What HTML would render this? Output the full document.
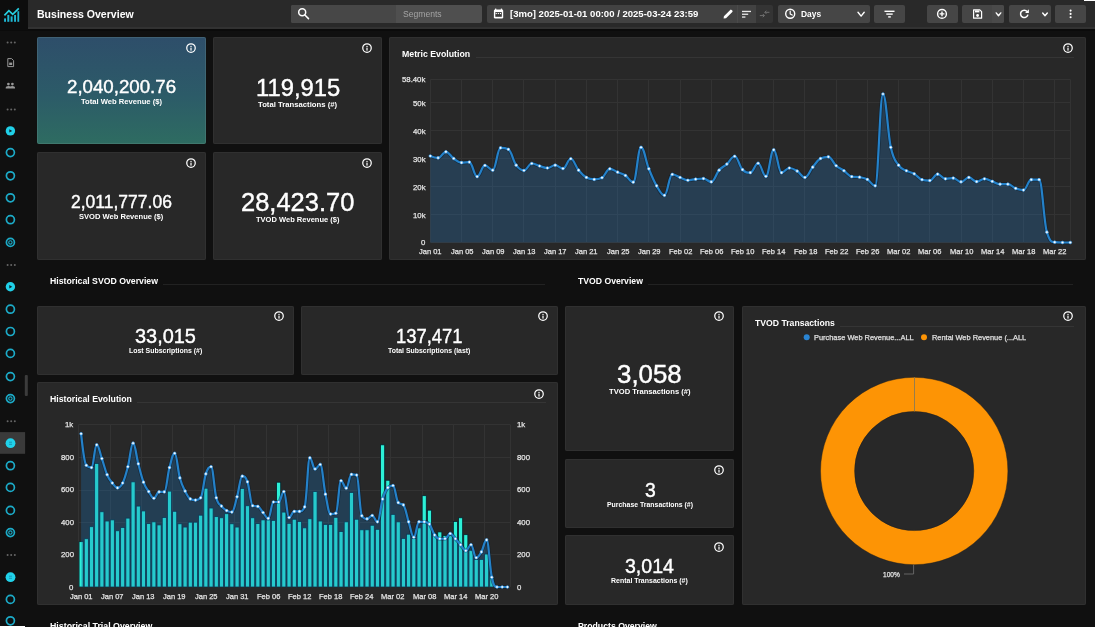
<!DOCTYPE html><html><head><meta charset="utf-8"><title>Business Overview</title><style>
html,body{margin:0;padding:0;background:#101010;}
body{width:1095px;height:627px;overflow:hidden;position:relative;will-change:transform;font-family:"Liberation Sans",sans-serif;}
.t{position:absolute;white-space:nowrap;line-height:1;transform-origin:0 50%;}
.b{position:absolute;}
svg{overflow:visible}
svg text{font-family:"Liberation Sans",sans-serif;}
</style></head><body>
<div class="b" style="left:0.00px;top:0.00px;width:1095.00px;height:27.00px;background:#292929;"></div>
<div class="b" style="left:0.00px;top:27.00px;width:1095.00px;height:2.00px;background:#323232;"></div>
<div class="b" style="left:0.00px;top:29.00px;width:1095.00px;height:1.50px;background:#0b0b0b;"></div>
<div class="b" style="left:0.00px;top:0.00px;width:28.00px;height:29.50px;background:#0d0d0d;"></div>
<div class="b" style="left:1084.00px;top:0.00px;width:11.00px;height:1.00px;background:#fff;"></div>
<div class="b" style="left:0.00px;top:625.70px;width:25.00px;height:1.30px;background:#fff;"></div>
<div class="t" style="left:37.45px;top:9px;font-size:11.48px;color:#fff;transform:scaleX(0.9193);font-weight:700;">Business Overview</div>
<div class="b" style="left:291.00px;top:5.00px;width:191.00px;height:18.00px;background:#4f4f4f;border-radius:2px;"></div>
<div class="b" style="left:291.00px;top:5.00px;width:105.00px;height:18.00px;background:#474747;border-radius:2px 0 0 2px;"></div>
<div class="t" style="left:402.60px;top:10px;font-size:8.72px;color:#a4a4a4;transform:scaleX(0.9850);">Segments</div>
<div class="b" style="left:487.00px;top:5.00px;width:268.50px;height:18.00px;background:#424242;border-radius:2px 0 0 2px;"></div>
<div class="b" style="left:737.20px;top:5.00px;width:0.80px;height:18.00px;background:#4a4a4a;"></div>
<div class="b" style="left:755.50px;top:5.00px;width:17.50px;height:18.00px;background:#343434;border-radius:0 2px 2px 0;"></div>
<div class="t" style="left:509.70px;top:10px;font-size:9.16px;color:#fff;transform:scaleX(1.0420);font-weight:700;">[3mo] 2025-01-01 00:00 / 2025-03-24 23:59</div>
<div class="b" style="left:777.50px;top:5.00px;width:92.00px;height:18.00px;background:#464646;border-radius:2px;"></div>
<div class="t" style="left:800.50px;top:9px;font-size:9.74px;color:#fff;transform:scaleX(0.8636);font-weight:700;">Days</div>
<div class="b" style="left:874.00px;top:5.00px;width:30.70px;height:18.00px;background:#464646;border-radius:2px;"></div>
<div class="b" style="left:927.00px;top:5.00px;width:31.00px;height:18.00px;background:#464646;border-radius:2px;"></div>
<div class="b" style="left:962.00px;top:5.00px;width:42.30px;height:18.00px;background:#464646;border-radius:2px;"></div>
<div class="b" style="left:991.50px;top:5.00px;width:12.80px;height:18.00px;background:#4a4a4a;border-radius:0 2px 2px 0;"></div>
<div class="b" style="left:1008.60px;top:5.00px;width:42.40px;height:18.00px;background:#464646;border-radius:2px;"></div>
<div class="b" style="left:1055.30px;top:5.00px;width:30.70px;height:18.00px;background:#464646;border-radius:2px;"></div>
<svg class="b" style="left:0;top:0" width="1095" height="627" viewBox="0 0 1095 627">
<g fill="none" stroke="#fff" stroke-width="1.5" stroke-linecap="round"><circle cx="302.2" cy="12.3" r="3.5"/><path d="M304.9 15L308.5 18.6"/></g>
<g><rect x="493.9" y="9.5" width="9.3" height="9" rx="1.3" fill="#fff"/><rect x="495.3" y="12.1" width="6.5" height="4.7" fill="#3a3a3a"/><rect x="495" y="8.6" width="1.3" height="1.8" fill="#fff"/><rect x="500.8" y="8.6" width="1.3" height="1.8" fill="#fff"/><rect x="495.7" y="13" width="1.1" height="1.1" fill="#fff"/><rect x="497.8" y="13" width="1.1" height="1.1" fill="#fff"/><rect x="499.9" y="13" width="1.1" height="1.1" fill="#fff"/></g>
<path d="M723.6 18.6L723.9 16.2L730.2 9.9Q730.9 9.2 731.6 9.9L732.3 10.6Q733 11.3 732.3 12L726 18.3Z" fill="#fff"/>
<g fill="#e8e8e8"><rect x="742" y="10.8" width="9" height="1.3"/><rect x="742" y="13.6" width="6.2" height="1.3"/><rect x="742" y="16.4" width="3.4" height="1.3"/></g>
<g fill="none" stroke="#707070" stroke-width="1"><path d="M764.8 12.3H769.4M766.4 10.7L764.8 12.3L766.4 13.9"/><path d="M759.8 15.6H764.4M762.8 14L764.4 15.6L762.8 17.2"/></g>
<g fill="none" stroke="#fff" stroke-width="1.4"><circle cx="790.2" cy="13.7" r="4.5"/><path d="M790.2 11V13.9L792.2 15.1" stroke-linecap="round" stroke-linejoin="round" stroke-width="1.2"/></g>
<path d="M858.00 12.30L861.10 16.10L864.20 12.30" fill="none" stroke="#fff" stroke-width="1.4" stroke-linecap="round" stroke-linejoin="round"/>
<g fill="#fff"><rect x="884.5" y="10.6" width="10" height="1.4"/><rect x="886.3" y="13.4" width="6.4" height="1.4"/><rect x="888.2" y="16.2" width="2.6" height="1.4"/></g>
<g fill="none" stroke="#fff" stroke-width="1.4"><circle cx="942" cy="13.9" r="4.4"/><path d="M942 11.5V16.3M939.6 13.9H944.4"/></g>
<g><path d="M973.6 9.8H979.8L981.6 11.6V18.2H973.6Z" fill="none" stroke="#fff" stroke-width="1.2" stroke-linejoin="round"/><rect x="975" y="10.4" width="4.4" height="2" fill="#fff"/><circle cx="977.6" cy="15.5" r="1.4" fill="#fff"/></g>
<path d="M996.20 12.90L998.50 15.70L1000.80 12.90" fill="none" stroke="#fff" stroke-width="1.4" stroke-linecap="round" stroke-linejoin="round"/>
<g fill="none" stroke="#fff" stroke-width="1.5" stroke-linecap="butt"><path d="M1027.2 11.6A3.7 3.7 0 1 0 1027.9 14.6"/></g><path d="M1028.9 9.2V13H1025.1Z" fill="#fff"/>
<path d="M1042.70 13.00L1045.00 15.80L1047.30 13.00" fill="none" stroke="#fff" stroke-width="1.4" stroke-linecap="round" stroke-linejoin="round"/>
<g fill="#fff"><circle cx="1070.6" cy="10.6" r="1.05"/><circle cx="1070.6" cy="13.9" r="1.05"/><circle cx="1070.6" cy="17.2" r="1.05"/></g>
<g fill="#1fb6d2"><rect x="4.1" y="18.4" width="1.9" height="3.4"/><rect x="7.3" y="14.9" width="2" height="6.9"/><rect x="10.6" y="16.4" width="2" height="5.4"/><rect x="14.1" y="14.9" width="1.9" height="6.9"/><rect x="17.4" y="11.2" width="1.8" height="10.6"/></g>
<path d="M4.4 15.4L8.9 10.6L12.7 14.3L18.8 8.3" fill="none" stroke="#27cfe0" stroke-width="1.7" stroke-linejoin="miter" stroke-linecap="butt"/>
<rect x="0" y="432.1" width="25.1" height="21.7" fill="#3a3a3a"/>
<rect x="24.8" y="375" width="3" height="21" rx="1" fill="#3c3c3c"/>
<g fill="#666"><circle cx="7.6" cy="42.6" r="1"/><circle cx="11.2" cy="42.6" r="1"/><circle cx="14.8" cy="42.6" r="1"/></g>
<g fill="#666"><circle cx="7.6" cy="109.4" r="1"/><circle cx="11.2" cy="109.4" r="1"/><circle cx="14.8" cy="109.4" r="1"/></g>
<g fill="#666"><circle cx="7.6" cy="265.1" r="1"/><circle cx="11.2" cy="265.1" r="1"/><circle cx="14.8" cy="265.1" r="1"/></g>
<g fill="#666"><circle cx="7.6" cy="421.3" r="1"/><circle cx="11.2" cy="421.3" r="1"/><circle cx="14.8" cy="421.3" r="1"/></g>
<g fill="#666"><circle cx="7.6" cy="555.0" r="1"/><circle cx="11.2" cy="555.0" r="1"/><circle cx="14.8" cy="555.0" r="1"/></g>
<g><path d="M7.8 58.6H11.6L13.6 60.6V66.6H7.8Z" fill="none" stroke="#989898" stroke-width="1" stroke-linejoin="round"/><rect x="9.2" y="62.6" width="3" height="2.4" fill="#989898"/></g>
<g fill="#989898"><circle cx="8.4" cy="84.1" r="1.35"/><circle cx="12.4" cy="84.1" r="1.35"/><path d="M5.7 88.6V87.4Q5.7 85.9 8.4 85.9Q10.2 85.9 10.4 86.6Q10.6 85.9 12.4 85.9Q15 85.9 15 87.4V88.6Z"/></g>
<circle cx="10.4" cy="130.9" r="4.7" fill="#20d0e8"/><path d="M9.3 129.2V132.6L12.2 130.9Z" fill="#10222a"/>
<circle cx="10.4" cy="286.8" r="4.7" fill="#20d0e8"/><path d="M9.3 285.1V288.5L12.2 286.8Z" fill="#10222a"/>
<circle cx="10.4" cy="152.6" r="4.0" fill="none" stroke="#1cabc8" stroke-width="1.7"/>
<circle cx="10.4" cy="175.8" r="4.0" fill="none" stroke="#1cabc8" stroke-width="1.7"/>
<circle cx="10.4" cy="197.8" r="4.0" fill="none" stroke="#1cabc8" stroke-width="1.7"/>
<circle cx="10.4" cy="219.7" r="4.0" fill="none" stroke="#1cabc8" stroke-width="1.7"/>
<circle cx="10.4" cy="309.2" r="4.0" fill="none" stroke="#1cabc8" stroke-width="1.7"/>
<circle cx="10.4" cy="331.5" r="4.0" fill="none" stroke="#1cabc8" stroke-width="1.7"/>
<circle cx="10.4" cy="353.4" r="4.0" fill="none" stroke="#1cabc8" stroke-width="1.7"/>
<circle cx="10.4" cy="376.6" r="4.0" fill="none" stroke="#1cabc8" stroke-width="1.7"/>
<circle cx="10.4" cy="465.7" r="4.0" fill="none" stroke="#1cabc8" stroke-width="1.7"/>
<circle cx="10.4" cy="487.4" r="4.0" fill="none" stroke="#1cabc8" stroke-width="1.7"/>
<circle cx="10.4" cy="510.4" r="4.0" fill="none" stroke="#1cabc8" stroke-width="1.7"/>
<circle cx="10.4" cy="599.4" r="4.0" fill="none" stroke="#1cabc8" stroke-width="1.7"/>
<circle cx="10.4" cy="620.8" r="4.0" fill="none" stroke="#1cabc8" stroke-width="1.7"/>
<circle cx="10.4" cy="242.4" r="4.0" fill="none" stroke="#1cabc8" stroke-width="1.7"/><circle cx="10.4" cy="242.4" r="1.7" fill="none" stroke="#1cabc8" stroke-width="1.1"/>
<circle cx="10.4" cy="398.6" r="4.0" fill="none" stroke="#1cabc8" stroke-width="1.7"/><circle cx="10.4" cy="398.6" r="1.7" fill="none" stroke="#1cabc8" stroke-width="1.1"/>
<circle cx="10.4" cy="532.6" r="4.0" fill="none" stroke="#1cabc8" stroke-width="1.7"/><circle cx="10.4" cy="532.6" r="1.7" fill="none" stroke="#1cabc8" stroke-width="1.1"/>
<circle cx="10.5" cy="443.2" r="4.9" fill="#20d2ea"/><path d="M9 442.2H12M9 444.3H12" stroke="#1a8fb0" stroke-width="0.9"/>
<circle cx="10.5" cy="577.2" r="4.9" fill="#20d2ea"/><path d="M9 576.2H12M9 578.3H12" stroke="#1a8fb0" stroke-width="0.9"/>
</svg>
<div class="b" style="left:37.20px;top:37.20px;width:168.70px;height:107.30px;background:linear-gradient(180deg,#2e4e6a 0%,#2c5b68 55%,#2e6c61 100%);border-radius:2px;box-shadow:inset 0 0 0 1px rgba(120,160,155,.24);"></div>
<div class="b" style="left:212.90px;top:37.20px;width:169.20px;height:107.30px;background:#282828;border-radius:2px;box-shadow:inset 0 0 0 1px #303030;"></div>
<div class="b" style="left:37.20px;top:152.20px;width:168.70px;height:107.50px;background:#282828;border-radius:2px;box-shadow:inset 0 0 0 1px #303030;"></div>
<div class="b" style="left:212.90px;top:152.20px;width:169.20px;height:107.50px;background:#282828;border-radius:2px;box-shadow:inset 0 0 0 1px #303030;"></div>
<div class="b" style="left:389.00px;top:37.00px;width:696.80px;height:222.70px;background:#282828;border-radius:2px;box-shadow:inset 0 0 0 1px #303030;"></div>
<svg class="b" style="left:184.80px;top:42.40px" width="12" height="12" viewBox="0 0 12 12"><circle cx="6" cy="6" r="4.25" fill="none" stroke="#fff" stroke-width="1.25"/><rect x="5.4" y="5.7" width="1.2" height="2.9" fill="#fff"/><rect x="5.4" y="3.9" width="1.2" height="1.2" fill="#fff"/></svg>
<svg class="b" style="left:361.10px;top:42.40px" width="12" height="12" viewBox="0 0 12 12"><circle cx="6" cy="6" r="4.25" fill="none" stroke="#fff" stroke-width="1.25"/><rect x="5.4" y="5.7" width="1.2" height="2.9" fill="#fff"/><rect x="5.4" y="3.9" width="1.2" height="1.2" fill="#fff"/></svg>
<svg class="b" style="left:184.80px;top:157.40px" width="12" height="12" viewBox="0 0 12 12"><circle cx="6" cy="6" r="4.25" fill="none" stroke="#fff" stroke-width="1.25"/><rect x="5.4" y="5.7" width="1.2" height="2.9" fill="#fff"/><rect x="5.4" y="3.9" width="1.2" height="1.2" fill="#fff"/></svg>
<svg class="b" style="left:361.10px;top:157.40px" width="12" height="12" viewBox="0 0 12 12"><circle cx="6" cy="6" r="4.25" fill="none" stroke="#fff" stroke-width="1.25"/><rect x="5.4" y="5.7" width="1.2" height="2.9" fill="#fff"/><rect x="5.4" y="3.9" width="1.2" height="1.2" fill="#fff"/></svg>
<svg class="b" style="left:1061.60px;top:42.00px" width="12" height="12" viewBox="0 0 12 12"><circle cx="6" cy="6" r="4.25" fill="none" stroke="#fff" stroke-width="1.25"/><rect x="5.4" y="5.7" width="1.2" height="2.9" fill="#fff"/><rect x="5.4" y="3.9" width="1.2" height="1.2" fill="#fff"/></svg>
<div class="t" style="left:66.80px;top:78px;font-size:18.08px;color:#fff;transform:scaleX(1.0333);-webkit-text-stroke:0.4px #fff;">2,040,200.76</div>
<div class="t" style="left:80.80px;top:98px;font-size:7.99px;color:#fff;transform:scaleX(0.9544);font-weight:700;">Total Web Revenue ($)</div>
<div class="t" style="left:255.70px;top:76px;font-size:24.44px;color:#fff;transform:scaleX(0.9734);-webkit-text-stroke:0.4px #fff;">119,915</div>
<div class="t" style="left:257.90px;top:101px;font-size:7.85px;color:#fff;transform:scaleX(0.9823);font-weight:700;">Total Transactions (#)</div>
<div class="t" style="left:70.70px;top:193px;font-size:18.08px;color:#fff;transform:scaleX(0.9681);-webkit-text-stroke:0.4px #fff;">2,011,777.06</div>
<div class="t" style="left:78.80px;top:213px;font-size:7.99px;color:#fff;transform:scaleX(0.9469);font-weight:700;">SVOD Web Revenue ($)</div>
<div class="t" style="left:240.90px;top:190px;font-size:25.14px;color:#fff;transform:scaleX(1.0136);-webkit-text-stroke:0.4px #fff;">28,423.70</div>
<div class="t" style="left:255.90px;top:216px;font-size:7.99px;color:#fff;transform:scaleX(0.9426);font-weight:700;">TVOD Web Revenue ($)</div>
<div class="t" style="left:402.00px;top:50px;font-size:8.72px;color:#fff;transform:scaleX(1.0052);font-weight:700;">Metric Evolution</div>
<div class="b" style="left:476.00px;top:56.80px;width:597.80px;height:1.00px;background:#353535;"></div>
<div class="t" style="left:49.70px;top:277px;font-size:8.72px;color:#fff;transform:scaleX(0.9991);font-weight:700;">Historical SVOD Overview</div>
<div class="b" style="left:163.30px;top:284.30px;width:382.20px;height:1.00px;background:#222222;"></div>
<div class="t" style="left:578.10px;top:277px;font-size:8.72px;color:#fff;transform:scaleX(0.9916);font-weight:700;">TVOD Overview</div>
<div class="b" style="left:647.80px;top:284.30px;width:425.20px;height:1.00px;background:#222222;"></div>
<div class="b" style="left:37.00px;top:306.00px;width:256.95px;height:68.70px;background:#282828;border-radius:2px;box-shadow:inset 0 0 0 1px #303030;"></div>
<div class="b" style="left:301.00px;top:306.00px;width:257.10px;height:68.70px;background:#282828;border-radius:2px;box-shadow:inset 0 0 0 1px #303030;"></div>
<div class="b" style="left:37.00px;top:381.90px;width:521.10px;height:222.80px;background:#282828;border-radius:2px;box-shadow:inset 0 0 0 1px #303030;"></div>
<div class="b" style="left:565.10px;top:306.00px;width:169.00px;height:144.90px;background:#282828;border-radius:2px;box-shadow:inset 0 0 0 1px #303030;"></div>
<div class="b" style="left:565.10px;top:458.80px;width:169.00px;height:69.10px;background:#282828;border-radius:2px;box-shadow:inset 0 0 0 1px #303030;"></div>
<div class="b" style="left:565.10px;top:535.20px;width:169.00px;height:69.50px;background:#282828;border-radius:2px;box-shadow:inset 0 0 0 1px #303030;"></div>
<div class="b" style="left:741.80px;top:306.00px;width:344.10px;height:298.70px;background:#282828;border-radius:2px;box-shadow:inset 0 0 0 1px #303030;"></div>
<svg class="b" style="left:272.80px;top:310.30px" width="12" height="12" viewBox="0 0 12 12"><circle cx="6" cy="6" r="4.25" fill="none" stroke="#fff" stroke-width="1.25"/><rect x="5.4" y="5.7" width="1.2" height="2.9" fill="#fff"/><rect x="5.4" y="3.9" width="1.2" height="1.2" fill="#fff"/></svg>
<svg class="b" style="left:536.70px;top:310.30px" width="12" height="12" viewBox="0 0 12 12"><circle cx="6" cy="6" r="4.25" fill="none" stroke="#fff" stroke-width="1.25"/><rect x="5.4" y="5.7" width="1.2" height="2.9" fill="#fff"/><rect x="5.4" y="3.9" width="1.2" height="1.2" fill="#fff"/></svg>
<svg class="b" style="left:533.30px;top:387.60px" width="12" height="12" viewBox="0 0 12 12"><circle cx="6" cy="6" r="4.25" fill="none" stroke="#fff" stroke-width="1.25"/><rect x="5.4" y="5.7" width="1.2" height="2.9" fill="#fff"/><rect x="5.4" y="3.9" width="1.2" height="1.2" fill="#fff"/></svg>
<svg class="b" style="left:713.10px;top:310.30px" width="12" height="12" viewBox="0 0 12 12"><circle cx="6" cy="6" r="4.25" fill="none" stroke="#fff" stroke-width="1.25"/><rect x="5.4" y="5.7" width="1.2" height="2.9" fill="#fff"/><rect x="5.4" y="3.9" width="1.2" height="1.2" fill="#fff"/></svg>
<svg class="b" style="left:1062.00px;top:310.30px" width="12" height="12" viewBox="0 0 12 12"><circle cx="6" cy="6" r="4.25" fill="none" stroke="#fff" stroke-width="1.25"/><rect x="5.4" y="5.7" width="1.2" height="2.9" fill="#fff"/><rect x="5.4" y="3.9" width="1.2" height="1.2" fill="#fff"/></svg>
<svg class="b" style="left:713.10px;top:463.80px" width="12" height="12" viewBox="0 0 12 12"><circle cx="6" cy="6" r="4.25" fill="none" stroke="#fff" stroke-width="1.25"/><rect x="5.4" y="5.7" width="1.2" height="2.9" fill="#fff"/><rect x="5.4" y="3.9" width="1.2" height="1.2" fill="#fff"/></svg>
<svg class="b" style="left:713.10px;top:540.50px" width="12" height="12" viewBox="0 0 12 12"><circle cx="6" cy="6" r="4.25" fill="none" stroke="#fff" stroke-width="1.25"/><rect x="5.4" y="5.7" width="1.2" height="2.9" fill="#fff"/><rect x="5.4" y="3.9" width="1.2" height="1.2" fill="#fff"/></svg>
<div class="t" style="left:135.00px;top:326px;font-size:20.48px;color:#fff;transform:scaleX(0.9734);-webkit-text-stroke:0.4px #fff;">33,015</div>
<div class="t" style="left:128.60px;top:347px;font-size:7.27px;color:#fff;transform:scaleX(0.9556);font-weight:700;">Lost Subscriptions (#)</div>
<div class="t" style="left:395.50px;top:326px;font-size:20.48px;color:#fff;transform:scaleX(0.8982);-webkit-text-stroke:0.4px #fff;">137,471</div>
<div class="t" style="left:388.00px;top:347px;font-size:7.27px;color:#fff;transform:scaleX(0.9508);font-weight:700;">Total Subscriptions (last)</div>
<div class="t" style="left:49.90px;top:395px;font-size:8.87px;color:#fff;transform:scaleX(0.9843);font-weight:700;">Historical Evolution</div>
<div class="b" style="left:136.70px;top:401.80px;width:409.60px;height:1.00px;background:#353535;"></div>
<div class="t" style="left:617.20px;top:362px;font-size:25.00px;color:#fff;transform:scaleX(1.0347);-webkit-text-stroke:0.4px #fff;">3,058</div>
<div class="t" style="left:608.70px;top:388px;font-size:7.70px;color:#fff;transform:scaleX(0.9889);font-weight:700;">TVOD Transactions (#)</div>
<div class="t" style="left:644.50px;top:481px;font-size:19.92px;color:#fff;transform:scaleX(0.9726);-webkit-text-stroke:0.4px #fff;">3</div>
<div class="t" style="left:606.60px;top:502px;font-size:7.12px;color:#fff;transform:scaleX(0.9710);font-weight:700;">Purchase Transactions (#)</div>
<div class="t" style="left:624.80px;top:556px;font-size:20.06px;color:#fff;transform:scaleX(0.9753);-webkit-text-stroke:0.4px #fff;">3,014</div>
<div class="t" style="left:611.10px;top:577px;font-size:7.27px;color:#fff;transform:scaleX(0.9603);font-weight:700;">Rental Transactions (#)</div>
<div class="t" style="left:755.10px;top:319px;font-size:8.72px;color:#fff;transform:scaleX(0.9919);font-weight:700;">TVOD Transactions</div>
<div class="b" style="left:840.20px;top:325.70px;width:233.80px;height:1.00px;background:#353535;"></div>
<div class="t" style="left:49.70px;top:622px;font-size:8.72px;color:#fff;transform:scaleX(1.0095);font-weight:700;">Historical Trial Overview</div>
<div class="t" style="left:578.10px;top:622px;font-size:8.72px;color:#fff;transform:scaleX(0.9986);font-weight:700;">Products Overview</div>
<svg class="b" style="left:0;top:0" width="1095" height="627" viewBox="0 0 1095 627">
<path d="M430.3 242.5H1070.3M430.3 214.5H1070.3M430.3 186.5H1070.3M430.3 158.5H1070.3M430.3 130.5H1070.3M430.3 102.5H1070.3M430.3 79.5H1070.3M430.5 79.5V242.5M461.5 79.5V242.5M492.5 79.5V242.5M523.5 79.5V242.5M555.5 79.5V242.5M586.5 79.5V242.5M617.5 79.5V242.5M648.5 79.5V242.5M680.5 79.5V242.5M711.5 79.5V242.5M742.5 79.5V242.5M773.5 79.5V242.5M804.5 79.5V242.5M836.5 79.5V242.5M867.5 79.5V242.5M898.5 79.5V242.5M929.5 79.5V242.5M961.5 79.5V242.5M992.5 79.5V242.5M1023.5 79.5V242.5M1054.5 79.5V242.5M1070.5 79.5V242.5" stroke="#333333" stroke-width="1" fill="none"/>
<path d="M430.30 155.98 C430.30 155.98 434.98 157.93 438.10 157.93 C441.23 157.93 442.79 151.79 445.91 151.79 C449.03 151.79 450.59 156.31 453.71 158.49 C456.84 160.67 458.40 162.67 461.52 162.67 C464.64 162.67 466.20 162.12 469.32 162.12 C472.45 162.12 474.01 176.63 477.13 176.63 C480.25 176.63 481.81 165.47 484.93 165.47 C488.06 165.47 489.62 170.21 492.74 170.21 C495.86 170.21 497.42 147.88 500.54 147.88 C503.67 147.88 505.23 147.88 508.35 149.28 C511.47 150.67 513.03 160.94 516.15 165.19 C519.28 169.43 520.84 170.49 523.96 170.49 C527.08 170.49 528.64 163.51 531.76 163.51 C534.89 163.51 536.45 165.13 539.57 166.02 C542.69 166.92 544.25 167.98 547.37 167.98 C550.50 167.98 552.06 165.19 555.18 165.19 C558.30 165.19 559.86 168.54 562.98 168.54 C566.10 168.54 567.67 158.77 570.79 158.77 C573.91 158.77 575.47 166.47 578.59 170.21 C581.71 173.95 583.28 175.63 586.40 177.47 C589.52 179.31 591.08 179.42 594.20 179.42 C597.32 179.42 598.89 179.42 602.01 177.75 C605.13 176.07 606.69 168.82 609.81 168.82 C612.93 168.82 614.50 170.82 617.62 172.16 C620.74 173.50 622.30 173.50 625.42 175.51 C628.54 177.52 630.10 182.21 633.23 182.21 C636.35 182.21 637.91 147.32 641.03 147.32 C644.15 147.32 645.71 161.11 648.84 168.82 C651.96 176.52 653.52 180.54 656.64 185.84 C659.76 191.14 661.32 195.33 664.45 195.33 C667.57 195.33 669.13 174.40 672.25 174.40 C675.37 174.40 676.93 176.30 680.06 177.47 C683.18 178.64 684.74 180.26 687.86 180.26 C690.98 180.26 692.54 179.48 695.67 179.14 C698.79 178.81 700.35 178.58 703.47 178.58 C706.59 178.58 708.15 181.93 711.28 181.93 C714.40 181.93 715.96 173.78 719.08 170.21 C722.20 166.64 723.76 166.86 726.89 164.07 C730.01 161.28 731.57 156.26 734.69 156.26 C737.81 156.26 739.37 166.58 742.50 169.65 C745.62 172.72 747.18 172.72 750.30 172.72 C753.42 172.72 754.98 163.23 758.10 163.23 C761.23 163.23 762.79 176.35 765.91 176.35 C769.03 176.35 770.59 149.84 773.71 149.84 C776.84 149.84 778.40 172.72 781.52 172.72 C784.64 172.72 786.20 167.98 789.32 167.98 C792.45 167.98 794.01 169.15 797.13 171.05 C800.25 172.95 801.81 177.47 804.93 177.47 C808.06 177.47 809.62 170.94 812.74 167.14 C815.86 163.34 817.42 160.16 820.54 158.49 C823.67 156.81 825.23 156.81 828.35 156.81 C831.47 156.81 833.03 162.95 836.15 165.74 C839.28 168.54 840.84 168.59 843.96 170.77 C847.08 172.95 848.64 176.07 851.76 176.63 C854.89 177.19 856.45 176.63 859.57 177.19 C862.69 177.75 864.25 177.69 867.37 179.42 C870.50 181.15 872.06 185.84 875.18 185.84 C878.30 185.84 879.86 94.01 882.98 94.01 C886.10 94.01 887.67 133.09 890.79 147.32 C893.91 161.56 895.47 160.50 898.59 165.19 C901.71 169.88 903.28 169.04 906.40 170.77 C909.52 172.50 911.08 172.05 914.20 173.84 C917.32 175.63 918.89 178.86 922.01 179.70 C925.13 180.54 926.69 180.54 929.81 180.54 C932.93 180.54 934.50 174.12 937.62 174.12 C940.74 174.12 942.30 178.86 945.42 178.86 C948.54 178.86 950.10 178.03 953.23 178.03 C956.35 178.03 957.91 181.93 961.03 181.93 C964.15 181.93 965.71 177.47 968.84 177.47 C971.96 177.47 973.52 181.65 976.64 181.65 C979.76 181.65 981.32 178.86 984.45 178.86 C987.57 178.86 989.13 180.31 992.25 181.38 C995.37 182.44 996.93 184.17 1000.06 184.17 C1003.18 184.17 1004.74 184.17 1007.86 184.17 C1010.98 184.17 1012.54 187.18 1015.67 188.35 C1018.79 189.53 1020.35 190.03 1023.47 190.03 C1026.59 190.03 1028.15 179.70 1031.28 179.70 C1034.40 179.70 1035.96 179.70 1039.08 179.70 C1042.20 179.70 1043.76 222.12 1046.89 232.17 C1050.01 242.22 1051.57 241.94 1054.69 242.22 C1057.81 242.50 1059.37 242.50 1062.50 242.50 C1065.62 242.50 1070.30 242.50 1070.30 242.50 L1070.30 242.50 L430.30 242.50 Z" fill="#2874b7" fill-opacity="0.3"/>
<path d="M430.30 155.98 C430.30 155.98 434.98 157.93 438.10 157.93 C441.23 157.93 442.79 151.79 445.91 151.79 C449.03 151.79 450.59 156.31 453.71 158.49 C456.84 160.67 458.40 162.67 461.52 162.67 C464.64 162.67 466.20 162.12 469.32 162.12 C472.45 162.12 474.01 176.63 477.13 176.63 C480.25 176.63 481.81 165.47 484.93 165.47 C488.06 165.47 489.62 170.21 492.74 170.21 C495.86 170.21 497.42 147.88 500.54 147.88 C503.67 147.88 505.23 147.88 508.35 149.28 C511.47 150.67 513.03 160.94 516.15 165.19 C519.28 169.43 520.84 170.49 523.96 170.49 C527.08 170.49 528.64 163.51 531.76 163.51 C534.89 163.51 536.45 165.13 539.57 166.02 C542.69 166.92 544.25 167.98 547.37 167.98 C550.50 167.98 552.06 165.19 555.18 165.19 C558.30 165.19 559.86 168.54 562.98 168.54 C566.10 168.54 567.67 158.77 570.79 158.77 C573.91 158.77 575.47 166.47 578.59 170.21 C581.71 173.95 583.28 175.63 586.40 177.47 C589.52 179.31 591.08 179.42 594.20 179.42 C597.32 179.42 598.89 179.42 602.01 177.75 C605.13 176.07 606.69 168.82 609.81 168.82 C612.93 168.82 614.50 170.82 617.62 172.16 C620.74 173.50 622.30 173.50 625.42 175.51 C628.54 177.52 630.10 182.21 633.23 182.21 C636.35 182.21 637.91 147.32 641.03 147.32 C644.15 147.32 645.71 161.11 648.84 168.82 C651.96 176.52 653.52 180.54 656.64 185.84 C659.76 191.14 661.32 195.33 664.45 195.33 C667.57 195.33 669.13 174.40 672.25 174.40 C675.37 174.40 676.93 176.30 680.06 177.47 C683.18 178.64 684.74 180.26 687.86 180.26 C690.98 180.26 692.54 179.48 695.67 179.14 C698.79 178.81 700.35 178.58 703.47 178.58 C706.59 178.58 708.15 181.93 711.28 181.93 C714.40 181.93 715.96 173.78 719.08 170.21 C722.20 166.64 723.76 166.86 726.89 164.07 C730.01 161.28 731.57 156.26 734.69 156.26 C737.81 156.26 739.37 166.58 742.50 169.65 C745.62 172.72 747.18 172.72 750.30 172.72 C753.42 172.72 754.98 163.23 758.10 163.23 C761.23 163.23 762.79 176.35 765.91 176.35 C769.03 176.35 770.59 149.84 773.71 149.84 C776.84 149.84 778.40 172.72 781.52 172.72 C784.64 172.72 786.20 167.98 789.32 167.98 C792.45 167.98 794.01 169.15 797.13 171.05 C800.25 172.95 801.81 177.47 804.93 177.47 C808.06 177.47 809.62 170.94 812.74 167.14 C815.86 163.34 817.42 160.16 820.54 158.49 C823.67 156.81 825.23 156.81 828.35 156.81 C831.47 156.81 833.03 162.95 836.15 165.74 C839.28 168.54 840.84 168.59 843.96 170.77 C847.08 172.95 848.64 176.07 851.76 176.63 C854.89 177.19 856.45 176.63 859.57 177.19 C862.69 177.75 864.25 177.69 867.37 179.42 C870.50 181.15 872.06 185.84 875.18 185.84 C878.30 185.84 879.86 94.01 882.98 94.01 C886.10 94.01 887.67 133.09 890.79 147.32 C893.91 161.56 895.47 160.50 898.59 165.19 C901.71 169.88 903.28 169.04 906.40 170.77 C909.52 172.50 911.08 172.05 914.20 173.84 C917.32 175.63 918.89 178.86 922.01 179.70 C925.13 180.54 926.69 180.54 929.81 180.54 C932.93 180.54 934.50 174.12 937.62 174.12 C940.74 174.12 942.30 178.86 945.42 178.86 C948.54 178.86 950.10 178.03 953.23 178.03 C956.35 178.03 957.91 181.93 961.03 181.93 C964.15 181.93 965.71 177.47 968.84 177.47 C971.96 177.47 973.52 181.65 976.64 181.65 C979.76 181.65 981.32 178.86 984.45 178.86 C987.57 178.86 989.13 180.31 992.25 181.38 C995.37 182.44 996.93 184.17 1000.06 184.17 C1003.18 184.17 1004.74 184.17 1007.86 184.17 C1010.98 184.17 1012.54 187.18 1015.67 188.35 C1018.79 189.53 1020.35 190.03 1023.47 190.03 C1026.59 190.03 1028.15 179.70 1031.28 179.70 C1034.40 179.70 1035.96 179.70 1039.08 179.70 C1042.20 179.70 1043.76 222.12 1046.89 232.17 C1050.01 242.22 1051.57 241.94 1054.69 242.22 C1057.81 242.50 1059.37 242.50 1062.50 242.50 C1065.62 242.50 1070.30 242.50 1070.30 242.50" fill="none" stroke="#0b1c2a" stroke-opacity="0.55" stroke-width="3.6" stroke-linejoin="round" stroke-linecap="round"/>
<path d="M430.30 155.98 C430.30 155.98 434.98 157.93 438.10 157.93 C441.23 157.93 442.79 151.79 445.91 151.79 C449.03 151.79 450.59 156.31 453.71 158.49 C456.84 160.67 458.40 162.67 461.52 162.67 C464.64 162.67 466.20 162.12 469.32 162.12 C472.45 162.12 474.01 176.63 477.13 176.63 C480.25 176.63 481.81 165.47 484.93 165.47 C488.06 165.47 489.62 170.21 492.74 170.21 C495.86 170.21 497.42 147.88 500.54 147.88 C503.67 147.88 505.23 147.88 508.35 149.28 C511.47 150.67 513.03 160.94 516.15 165.19 C519.28 169.43 520.84 170.49 523.96 170.49 C527.08 170.49 528.64 163.51 531.76 163.51 C534.89 163.51 536.45 165.13 539.57 166.02 C542.69 166.92 544.25 167.98 547.37 167.98 C550.50 167.98 552.06 165.19 555.18 165.19 C558.30 165.19 559.86 168.54 562.98 168.54 C566.10 168.54 567.67 158.77 570.79 158.77 C573.91 158.77 575.47 166.47 578.59 170.21 C581.71 173.95 583.28 175.63 586.40 177.47 C589.52 179.31 591.08 179.42 594.20 179.42 C597.32 179.42 598.89 179.42 602.01 177.75 C605.13 176.07 606.69 168.82 609.81 168.82 C612.93 168.82 614.50 170.82 617.62 172.16 C620.74 173.50 622.30 173.50 625.42 175.51 C628.54 177.52 630.10 182.21 633.23 182.21 C636.35 182.21 637.91 147.32 641.03 147.32 C644.15 147.32 645.71 161.11 648.84 168.82 C651.96 176.52 653.52 180.54 656.64 185.84 C659.76 191.14 661.32 195.33 664.45 195.33 C667.57 195.33 669.13 174.40 672.25 174.40 C675.37 174.40 676.93 176.30 680.06 177.47 C683.18 178.64 684.74 180.26 687.86 180.26 C690.98 180.26 692.54 179.48 695.67 179.14 C698.79 178.81 700.35 178.58 703.47 178.58 C706.59 178.58 708.15 181.93 711.28 181.93 C714.40 181.93 715.96 173.78 719.08 170.21 C722.20 166.64 723.76 166.86 726.89 164.07 C730.01 161.28 731.57 156.26 734.69 156.26 C737.81 156.26 739.37 166.58 742.50 169.65 C745.62 172.72 747.18 172.72 750.30 172.72 C753.42 172.72 754.98 163.23 758.10 163.23 C761.23 163.23 762.79 176.35 765.91 176.35 C769.03 176.35 770.59 149.84 773.71 149.84 C776.84 149.84 778.40 172.72 781.52 172.72 C784.64 172.72 786.20 167.98 789.32 167.98 C792.45 167.98 794.01 169.15 797.13 171.05 C800.25 172.95 801.81 177.47 804.93 177.47 C808.06 177.47 809.62 170.94 812.74 167.14 C815.86 163.34 817.42 160.16 820.54 158.49 C823.67 156.81 825.23 156.81 828.35 156.81 C831.47 156.81 833.03 162.95 836.15 165.74 C839.28 168.54 840.84 168.59 843.96 170.77 C847.08 172.95 848.64 176.07 851.76 176.63 C854.89 177.19 856.45 176.63 859.57 177.19 C862.69 177.75 864.25 177.69 867.37 179.42 C870.50 181.15 872.06 185.84 875.18 185.84 C878.30 185.84 879.86 94.01 882.98 94.01 C886.10 94.01 887.67 133.09 890.79 147.32 C893.91 161.56 895.47 160.50 898.59 165.19 C901.71 169.88 903.28 169.04 906.40 170.77 C909.52 172.50 911.08 172.05 914.20 173.84 C917.32 175.63 918.89 178.86 922.01 179.70 C925.13 180.54 926.69 180.54 929.81 180.54 C932.93 180.54 934.50 174.12 937.62 174.12 C940.74 174.12 942.30 178.86 945.42 178.86 C948.54 178.86 950.10 178.03 953.23 178.03 C956.35 178.03 957.91 181.93 961.03 181.93 C964.15 181.93 965.71 177.47 968.84 177.47 C971.96 177.47 973.52 181.65 976.64 181.65 C979.76 181.65 981.32 178.86 984.45 178.86 C987.57 178.86 989.13 180.31 992.25 181.38 C995.37 182.44 996.93 184.17 1000.06 184.17 C1003.18 184.17 1004.74 184.17 1007.86 184.17 C1010.98 184.17 1012.54 187.18 1015.67 188.35 C1018.79 189.53 1020.35 190.03 1023.47 190.03 C1026.59 190.03 1028.15 179.70 1031.28 179.70 C1034.40 179.70 1035.96 179.70 1039.08 179.70 C1042.20 179.70 1043.76 222.12 1046.89 232.17 C1050.01 242.22 1051.57 241.94 1054.69 242.22 C1057.81 242.50 1059.37 242.50 1062.50 242.50 C1065.62 242.50 1070.30 242.50 1070.30 242.50" fill="none" stroke="#2481c9" stroke-width="2.2" stroke-linejoin="round" stroke-linecap="round"/>
<g fill="#fff" stroke="#3aa0ee" stroke-width="0.6"><circle cx="430.30" cy="155.98" r="1.35"/><circle cx="438.10" cy="157.93" r="1.35"/><circle cx="445.91" cy="151.79" r="1.35"/><circle cx="453.71" cy="158.49" r="1.35"/><circle cx="461.52" cy="162.67" r="1.35"/><circle cx="469.32" cy="162.12" r="1.35"/><circle cx="477.13" cy="176.63" r="1.35"/><circle cx="484.93" cy="165.47" r="1.35"/><circle cx="492.74" cy="170.21" r="1.35"/><circle cx="500.54" cy="147.88" r="1.35"/><circle cx="508.35" cy="149.28" r="1.35"/><circle cx="516.15" cy="165.19" r="1.35"/><circle cx="523.96" cy="170.49" r="1.35"/><circle cx="531.76" cy="163.51" r="1.35"/><circle cx="539.57" cy="166.02" r="1.35"/><circle cx="547.37" cy="167.98" r="1.35"/><circle cx="555.18" cy="165.19" r="1.35"/><circle cx="562.98" cy="168.54" r="1.35"/><circle cx="570.79" cy="158.77" r="1.35"/><circle cx="578.59" cy="170.21" r="1.35"/><circle cx="586.40" cy="177.47" r="1.35"/><circle cx="594.20" cy="179.42" r="1.35"/><circle cx="602.01" cy="177.75" r="1.35"/><circle cx="609.81" cy="168.82" r="1.35"/><circle cx="617.62" cy="172.16" r="1.35"/><circle cx="625.42" cy="175.51" r="1.35"/><circle cx="633.23" cy="182.21" r="1.35"/><circle cx="641.03" cy="147.32" r="1.35"/><circle cx="648.84" cy="168.82" r="1.35"/><circle cx="656.64" cy="185.84" r="1.35"/><circle cx="664.45" cy="195.33" r="1.35"/><circle cx="672.25" cy="174.40" r="1.35"/><circle cx="680.06" cy="177.47" r="1.35"/><circle cx="687.86" cy="180.26" r="1.35"/><circle cx="695.67" cy="179.14" r="1.35"/><circle cx="703.47" cy="178.58" r="1.35"/><circle cx="711.28" cy="181.93" r="1.35"/><circle cx="719.08" cy="170.21" r="1.35"/><circle cx="726.89" cy="164.07" r="1.35"/><circle cx="734.69" cy="156.26" r="1.35"/><circle cx="742.50" cy="169.65" r="1.35"/><circle cx="750.30" cy="172.72" r="1.35"/><circle cx="758.10" cy="163.23" r="1.35"/><circle cx="765.91" cy="176.35" r="1.35"/><circle cx="773.71" cy="149.84" r="1.35"/><circle cx="781.52" cy="172.72" r="1.35"/><circle cx="789.32" cy="167.98" r="1.35"/><circle cx="797.13" cy="171.05" r="1.35"/><circle cx="804.93" cy="177.47" r="1.35"/><circle cx="812.74" cy="167.14" r="1.35"/><circle cx="820.54" cy="158.49" r="1.35"/><circle cx="828.35" cy="156.81" r="1.35"/><circle cx="836.15" cy="165.74" r="1.35"/><circle cx="843.96" cy="170.77" r="1.35"/><circle cx="851.76" cy="176.63" r="1.35"/><circle cx="859.57" cy="177.19" r="1.35"/><circle cx="867.37" cy="179.42" r="1.35"/><circle cx="875.18" cy="185.84" r="1.35"/><circle cx="882.98" cy="94.01" r="1.35"/><circle cx="890.79" cy="147.32" r="1.35"/><circle cx="898.59" cy="165.19" r="1.35"/><circle cx="906.40" cy="170.77" r="1.35"/><circle cx="914.20" cy="173.84" r="1.35"/><circle cx="922.01" cy="179.70" r="1.35"/><circle cx="929.81" cy="180.54" r="1.35"/><circle cx="937.62" cy="174.12" r="1.35"/><circle cx="945.42" cy="178.86" r="1.35"/><circle cx="953.23" cy="178.03" r="1.35"/><circle cx="961.03" cy="181.93" r="1.35"/><circle cx="968.84" cy="177.47" r="1.35"/><circle cx="976.64" cy="181.65" r="1.35"/><circle cx="984.45" cy="178.86" r="1.35"/><circle cx="992.25" cy="181.38" r="1.35"/><circle cx="1000.06" cy="184.17" r="1.35"/><circle cx="1007.86" cy="184.17" r="1.35"/><circle cx="1015.67" cy="188.35" r="1.35"/><circle cx="1023.47" cy="190.03" r="1.35"/><circle cx="1031.28" cy="179.70" r="1.35"/><circle cx="1039.08" cy="179.70" r="1.35"/><circle cx="1046.89" cy="232.17" r="1.35"/><circle cx="1054.69" cy="242.22" r="1.35"/><circle cx="1062.50" cy="242.50" r="1.35"/><circle cx="1070.30" cy="242.50" r="1.35"/></g>
</svg>
<div class="t" style="left:421.28px;top:239px;font-size:8.10px;color:#e6e6e6;transform:scaleX(0.9600);-webkit-text-stroke:0.25px #e6e6e6;">0</div>
<div class="t" style="left:413.06px;top:212px;font-size:8.10px;color:#e6e6e6;transform:scaleX(0.9600);-webkit-text-stroke:0.25px #e6e6e6;">10k</div>
<div class="t" style="left:413.06px;top:184px;font-size:8.10px;color:#e6e6e6;transform:scaleX(0.9600);-webkit-text-stroke:0.25px #e6e6e6;">20k</div>
<div class="t" style="left:413.06px;top:156px;font-size:8.10px;color:#e6e6e6;transform:scaleX(0.9600);-webkit-text-stroke:0.25px #e6e6e6;">30k</div>
<div class="t" style="left:413.06px;top:128px;font-size:8.10px;color:#e6e6e6;transform:scaleX(0.9600);-webkit-text-stroke:0.25px #e6e6e6;">40k</div>
<div class="t" style="left:413.06px;top:100px;font-size:8.10px;color:#e6e6e6;transform:scaleX(0.9600);-webkit-text-stroke:0.25px #e6e6e6;">50k</div>
<div class="t" style="left:402.25px;top:76px;font-size:8.10px;color:#e6e6e6;transform:scaleX(0.9600);-webkit-text-stroke:0.25px #e6e6e6;">58.40k</div>
<div class="t" style="left:419.33px;top:248px;font-size:7.90px;color:#e6e6e6;transform:scaleX(0.9500);-webkit-text-stroke:0.25px #e6e6e6;">Jan 01</div>
<div class="t" style="left:450.55px;top:248px;font-size:7.90px;color:#e6e6e6;transform:scaleX(0.9500);-webkit-text-stroke:0.25px #e6e6e6;">Jan 05</div>
<div class="t" style="left:481.77px;top:248px;font-size:7.90px;color:#e6e6e6;transform:scaleX(0.9500);-webkit-text-stroke:0.25px #e6e6e6;">Jan 09</div>
<div class="t" style="left:512.99px;top:248px;font-size:7.90px;color:#e6e6e6;transform:scaleX(0.9500);-webkit-text-stroke:0.25px #e6e6e6;">Jan 13</div>
<div class="t" style="left:544.21px;top:248px;font-size:7.90px;color:#e6e6e6;transform:scaleX(0.9500);-webkit-text-stroke:0.25px #e6e6e6;">Jan 17</div>
<div class="t" style="left:575.43px;top:248px;font-size:7.90px;color:#e6e6e6;transform:scaleX(0.9500);-webkit-text-stroke:0.25px #e6e6e6;">Jan 21</div>
<div class="t" style="left:606.65px;top:248px;font-size:7.90px;color:#e6e6e6;transform:scaleX(0.9500);-webkit-text-stroke:0.25px #e6e6e6;">Jan 25</div>
<div class="t" style="left:637.87px;top:248px;font-size:7.90px;color:#e6e6e6;transform:scaleX(0.9500);-webkit-text-stroke:0.25px #e6e6e6;">Jan 29</div>
<div class="t" style="left:668.67px;top:248px;font-size:7.90px;color:#e6e6e6;transform:scaleX(0.9500);-webkit-text-stroke:0.25px #e6e6e6;">Feb 02</div>
<div class="t" style="left:699.89px;top:248px;font-size:7.90px;color:#e6e6e6;transform:scaleX(0.9500);-webkit-text-stroke:0.25px #e6e6e6;">Feb 06</div>
<div class="t" style="left:731.11px;top:248px;font-size:7.90px;color:#e6e6e6;transform:scaleX(0.9500);-webkit-text-stroke:0.25px #e6e6e6;">Feb 10</div>
<div class="t" style="left:762.33px;top:248px;font-size:7.90px;color:#e6e6e6;transform:scaleX(0.9500);-webkit-text-stroke:0.25px #e6e6e6;">Feb 14</div>
<div class="t" style="left:793.55px;top:248px;font-size:7.90px;color:#e6e6e6;transform:scaleX(0.9500);-webkit-text-stroke:0.25px #e6e6e6;">Feb 18</div>
<div class="t" style="left:824.77px;top:248px;font-size:7.90px;color:#e6e6e6;transform:scaleX(0.9500);-webkit-text-stroke:0.25px #e6e6e6;">Feb 22</div>
<div class="t" style="left:855.99px;top:248px;font-size:7.90px;color:#e6e6e6;transform:scaleX(0.9500);-webkit-text-stroke:0.25px #e6e6e6;">Feb 26</div>
<div class="t" style="left:887.21px;top:248px;font-size:7.90px;color:#e6e6e6;transform:scaleX(0.9500);-webkit-text-stroke:0.25px #e6e6e6;">Mar 02</div>
<div class="t" style="left:918.43px;top:248px;font-size:7.90px;color:#e6e6e6;transform:scaleX(0.9500);-webkit-text-stroke:0.25px #e6e6e6;">Mar 06</div>
<div class="t" style="left:949.65px;top:248px;font-size:7.90px;color:#e6e6e6;transform:scaleX(0.9500);-webkit-text-stroke:0.25px #e6e6e6;">Mar 10</div>
<div class="t" style="left:980.87px;top:248px;font-size:7.90px;color:#e6e6e6;transform:scaleX(0.9500);-webkit-text-stroke:0.25px #e6e6e6;">Mar 14</div>
<div class="t" style="left:1012.09px;top:248px;font-size:7.90px;color:#e6e6e6;transform:scaleX(0.9500);-webkit-text-stroke:0.25px #e6e6e6;">Mar 18</div>
<div class="t" style="left:1043.31px;top:248px;font-size:7.90px;color:#e6e6e6;transform:scaleX(0.9500);-webkit-text-stroke:0.25px #e6e6e6;">Mar 22</div>
<svg class="b" style="left:0;top:0" width="1095" height="627" viewBox="0 0 1095 627">
<path d="M78.5 587.5H510.0M78.5 554.5H510.0M78.5 522.5H510.0M78.5 490.5H510.0M78.5 457.5H510.0M78.5 424.5H510.0M78.5 424.5V587.0M110.5 424.5V587.0M141.5 424.5V587.0M172.5 424.5V587.0M203.5 424.5V587.0M234.5 424.5V587.0M266.5 424.5V587.0M297.5 424.5V587.0M328.5 424.5V587.0M359.5 424.5V587.0M390.5 424.5V587.0M422.5 424.5V587.0M453.5 424.5V587.0M484.5 424.5V587.0M510.5 424.5V587.0" stroke="#333333" stroke-width="1" fill="none"/>
<g fill="#2cf0d6" stroke="#05202c" stroke-width="0.8"><rect x="79.05" y="541.66" width="4.10" height="45.34"/><rect x="84.25" y="538.74" width="4.10" height="48.26"/><rect x="89.45" y="526.71" width="4.10" height="60.29"/><rect x="94.65" y="463.50" width="4.10" height="123.50"/><rect x="99.84" y="511.76" width="4.10" height="75.24"/><rect x="105.04" y="521.02" width="4.10" height="65.98"/><rect x="110.24" y="519.89" width="4.10" height="67.11"/><rect x="115.44" y="530.77" width="4.10" height="56.23"/><rect x="120.64" y="527.52" width="4.10" height="59.48"/><rect x="125.84" y="518.10" width="4.10" height="68.90"/><rect x="131.04" y="481.86" width="4.10" height="105.14"/><rect x="136.24" y="506.07" width="4.10" height="80.92"/><rect x="141.43" y="510.95" width="4.10" height="76.05"/><rect x="146.63" y="523.62" width="4.10" height="63.38"/><rect x="151.83" y="521.84" width="4.10" height="65.16"/><rect x="157.03" y="524.92" width="4.10" height="62.08"/><rect x="162.23" y="517.45" width="4.10" height="69.55"/><rect x="167.43" y="491.12" width="4.10" height="95.88"/><rect x="172.63" y="511.27" width="4.10" height="75.73"/><rect x="177.83" y="523.79" width="4.10" height="63.21"/><rect x="183.03" y="527.04" width="4.10" height="59.96"/><rect x="188.22" y="522.16" width="4.10" height="64.84"/><rect x="193.42" y="522.16" width="4.10" height="64.84"/><rect x="198.62" y="515.17" width="4.10" height="71.83"/><rect x="203.82" y="488.20" width="4.10" height="98.80"/><rect x="209.02" y="508.02" width="4.10" height="78.98"/><rect x="214.22" y="516.64" width="4.10" height="70.36"/><rect x="219.42" y="517.77" width="4.10" height="69.23"/><rect x="224.62" y="513.71" width="4.10" height="73.29"/><rect x="229.81" y="523.79" width="4.10" height="63.21"/><rect x="235.01" y="527.04" width="4.10" height="59.96"/><rect x="240.21" y="488.52" width="4.10" height="98.48"/><rect x="245.41" y="505.75" width="4.10" height="81.25"/><rect x="250.61" y="517.77" width="4.10" height="69.23"/><rect x="255.81" y="523.62" width="4.10" height="63.38"/><rect x="261.01" y="519.89" width="4.10" height="67.11"/><rect x="266.21" y="519.89" width="4.10" height="67.11"/><rect x="271.40" y="520.38" width="4.10" height="66.62"/><rect x="276.60" y="482.19" width="4.10" height="104.81"/><rect x="281.80" y="512.09" width="4.10" height="74.91"/><rect x="287.00" y="523.30" width="4.10" height="63.70"/><rect x="292.20" y="519.24" width="4.10" height="67.76"/><rect x="297.40" y="521.51" width="4.10" height="65.49"/><rect x="302.60" y="527.85" width="4.10" height="59.15"/><rect x="307.80" y="518.75" width="4.10" height="68.25"/><rect x="313.00" y="491.61" width="4.10" height="95.39"/><rect x="318.19" y="521.02" width="4.10" height="65.98"/><rect x="323.39" y="524.44" width="4.10" height="62.56"/><rect x="328.59" y="524.44" width="4.10" height="62.56"/><rect x="333.79" y="517.29" width="4.10" height="69.71"/><rect x="338.99" y="531.59" width="4.10" height="55.41"/><rect x="344.19" y="521.84" width="4.10" height="65.16"/><rect x="349.39" y="492.59" width="4.10" height="94.41"/><rect x="354.59" y="519.24" width="4.10" height="67.76"/><rect x="359.78" y="529.80" width="4.10" height="57.20"/><rect x="364.98" y="529.80" width="4.10" height="57.20"/><rect x="370.18" y="525.25" width="4.10" height="61.75"/><rect x="375.38" y="529.31" width="4.10" height="57.69"/><rect x="380.58" y="444.81" width="4.10" height="142.19"/><rect x="385.78" y="480.24" width="4.10" height="106.76"/><rect x="390.98" y="514.36" width="4.10" height="72.64"/><rect x="396.18" y="521.84" width="4.10" height="65.16"/><rect x="401.37" y="538.41" width="4.10" height="48.59"/><rect x="406.57" y="534.19" width="4.10" height="52.81"/><rect x="411.77" y="538.41" width="4.10" height="48.59"/><rect x="416.97" y="527.85" width="4.10" height="59.15"/><rect x="422.17" y="495.68" width="4.10" height="91.33"/><rect x="427.37" y="510.14" width="4.10" height="76.86"/><rect x="432.57" y="533.54" width="4.10" height="53.46"/><rect x="437.77" y="531.91" width="4.10" height="55.09"/><rect x="442.97" y="535.65" width="4.10" height="51.35"/><rect x="448.16" y="535.65" width="4.10" height="51.35"/><rect x="453.36" y="521.51" width="4.10" height="65.49"/><rect x="458.56" y="517.77" width="4.10" height="69.23"/><rect x="463.76" y="534.67" width="4.10" height="52.33"/><rect x="468.96" y="550.27" width="4.10" height="36.73"/><rect x="474.16" y="559.38" width="4.10" height="27.62"/><rect x="479.36" y="559.38" width="4.10" height="27.62"/><rect x="484.56" y="554.01" width="4.10" height="32.99"/><rect x="489.75" y="578.06" width="4.10" height="8.94"/></g>
<path d="M81.10 433.76 C81.10 433.76 84.22 463.01 86.30 465.29 C88.38 467.56 89.42 467.56 91.50 467.56 C93.58 467.56 94.62 444.81 96.70 444.81 C98.78 444.81 99.82 452.64 101.89 458.62 C103.97 464.61 105.01 469.84 107.09 474.71 C109.17 479.59 110.21 480.37 112.29 483.00 C114.37 485.63 115.41 487.88 117.49 487.88 C119.57 487.88 120.61 487.22 122.69 483.00 C124.77 478.77 125.81 474.71 127.89 466.75 C129.97 458.79 131.01 443.19 133.09 443.19 C135.17 443.19 136.21 456.02 138.29 463.82 C140.37 471.62 141.41 476.63 143.48 482.19 C145.56 487.75 146.60 488.40 148.68 491.61 C150.76 494.83 151.80 498.27 153.88 498.27 C155.96 498.27 157.00 491.94 159.08 491.94 C161.16 491.94 162.20 491.94 164.28 491.94 C166.36 491.94 167.40 475.30 169.48 467.56 C171.56 459.83 172.60 453.26 174.68 453.26 C176.76 453.26 177.80 470.39 179.88 477.96 C181.96 485.53 183.00 486.93 185.08 491.12 C187.15 495.32 188.19 497.79 190.27 498.93 C192.35 500.06 193.39 500.06 195.47 500.06 C197.55 500.06 198.59 500.06 200.67 497.79 C202.75 495.51 203.79 480.11 205.87 473.90 C207.95 467.69 208.99 466.75 211.07 466.75 C213.15 466.75 214.19 489.92 216.27 497.79 C218.35 505.65 219.39 503.51 221.47 506.07 C223.55 508.64 224.59 509.42 226.67 510.62 C228.75 511.83 229.78 512.09 231.86 512.09 C233.94 512.09 234.98 504.00 237.06 496.81 C239.14 489.63 240.18 476.18 242.26 476.18 C244.34 476.18 245.38 476.18 247.46 481.86 C249.54 487.55 250.58 505.10 252.66 505.75 C254.74 506.40 255.78 505.75 257.86 506.40 C259.94 507.05 260.98 510.17 263.06 512.58 C265.14 514.98 266.18 518.42 268.26 518.42 C270.34 518.42 271.38 502.01 273.45 502.01 C275.53 502.01 276.57 502.01 278.65 502.01 C280.73 502.01 281.77 491.61 283.85 491.61 C285.93 491.61 286.97 517.61 289.05 517.61 C291.13 517.61 292.17 511.44 294.25 511.44 C296.33 511.44 297.37 511.44 299.45 511.44 C301.53 511.44 302.57 511.44 304.65 506.89 C306.73 502.34 307.77 457.81 309.85 457.81 C311.93 457.81 312.97 469.02 315.05 469.02 C317.12 469.02 318.16 464.48 320.24 464.48 C322.32 464.48 323.36 484.30 325.44 494.21 C327.52 504.12 328.56 514.04 330.64 514.04 C332.72 514.04 333.76 514.04 335.84 513.23 C337.92 512.41 338.96 480.73 341.04 480.73 C343.12 480.73 344.16 488.20 346.24 488.20 C348.32 488.20 349.36 474.39 351.44 474.39 C353.52 474.39 354.56 474.39 356.64 475.04 C358.72 475.69 359.75 512.74 361.83 515.83 C363.91 518.91 364.95 518.91 367.03 518.91 C369.11 518.91 370.15 515.50 372.23 515.50 C374.31 515.50 375.35 521.84 377.43 521.84 C379.51 521.84 380.55 505.91 382.63 499.09 C384.71 492.26 385.75 489.82 387.83 487.71 C389.91 485.60 390.95 485.60 393.03 485.60 C395.11 485.60 396.15 500.39 398.23 502.66 C400.31 504.94 401.35 502.66 403.42 504.94 C405.50 507.21 406.54 515.37 408.62 521.84 C410.70 528.31 411.74 537.27 413.82 537.27 C415.90 537.27 416.94 521.84 419.02 521.84 C421.10 521.84 422.14 521.84 424.22 521.84 C426.30 521.84 427.34 521.84 429.42 524.11 C431.50 526.39 432.54 532.07 434.62 535.00 C436.70 537.92 437.74 538.74 439.82 538.74 C441.90 538.74 442.94 538.74 445.02 538.74 C447.09 538.74 448.13 533.54 450.21 533.54 C452.29 533.54 453.33 536.50 455.41 538.74 C457.49 540.98 458.53 542.35 460.61 544.75 C462.69 547.16 463.73 550.76 465.81 550.76 C467.89 550.76 468.93 544.75 471.01 544.75 C473.09 544.75 474.13 557.75 476.21 557.75 C478.29 557.75 479.33 555.48 481.41 551.90 C483.49 548.32 484.53 539.88 486.61 539.88 C488.68 539.88 489.72 567.82 491.80 577.25 C493.88 586.67 494.92 587.00 497.00 587.00 C499.08 587.00 500.12 587.00 502.20 587.00 C504.28 587.00 507.40 587.00 507.40 587.00 L507.40 587.00 L81.10 587.00 Z" fill="#1973b9" fill-opacity="0.3"/>
<path d="M81.10 433.76 C81.10 433.76 84.22 463.01 86.30 465.29 C88.38 467.56 89.42 467.56 91.50 467.56 C93.58 467.56 94.62 444.81 96.70 444.81 C98.78 444.81 99.82 452.64 101.89 458.62 C103.97 464.61 105.01 469.84 107.09 474.71 C109.17 479.59 110.21 480.37 112.29 483.00 C114.37 485.63 115.41 487.88 117.49 487.88 C119.57 487.88 120.61 487.22 122.69 483.00 C124.77 478.77 125.81 474.71 127.89 466.75 C129.97 458.79 131.01 443.19 133.09 443.19 C135.17 443.19 136.21 456.02 138.29 463.82 C140.37 471.62 141.41 476.63 143.48 482.19 C145.56 487.75 146.60 488.40 148.68 491.61 C150.76 494.83 151.80 498.27 153.88 498.27 C155.96 498.27 157.00 491.94 159.08 491.94 C161.16 491.94 162.20 491.94 164.28 491.94 C166.36 491.94 167.40 475.30 169.48 467.56 C171.56 459.83 172.60 453.26 174.68 453.26 C176.76 453.26 177.80 470.39 179.88 477.96 C181.96 485.53 183.00 486.93 185.08 491.12 C187.15 495.32 188.19 497.79 190.27 498.93 C192.35 500.06 193.39 500.06 195.47 500.06 C197.55 500.06 198.59 500.06 200.67 497.79 C202.75 495.51 203.79 480.11 205.87 473.90 C207.95 467.69 208.99 466.75 211.07 466.75 C213.15 466.75 214.19 489.92 216.27 497.79 C218.35 505.65 219.39 503.51 221.47 506.07 C223.55 508.64 224.59 509.42 226.67 510.62 C228.75 511.83 229.78 512.09 231.86 512.09 C233.94 512.09 234.98 504.00 237.06 496.81 C239.14 489.63 240.18 476.18 242.26 476.18 C244.34 476.18 245.38 476.18 247.46 481.86 C249.54 487.55 250.58 505.10 252.66 505.75 C254.74 506.40 255.78 505.75 257.86 506.40 C259.94 507.05 260.98 510.17 263.06 512.58 C265.14 514.98 266.18 518.42 268.26 518.42 C270.34 518.42 271.38 502.01 273.45 502.01 C275.53 502.01 276.57 502.01 278.65 502.01 C280.73 502.01 281.77 491.61 283.85 491.61 C285.93 491.61 286.97 517.61 289.05 517.61 C291.13 517.61 292.17 511.44 294.25 511.44 C296.33 511.44 297.37 511.44 299.45 511.44 C301.53 511.44 302.57 511.44 304.65 506.89 C306.73 502.34 307.77 457.81 309.85 457.81 C311.93 457.81 312.97 469.02 315.05 469.02 C317.12 469.02 318.16 464.48 320.24 464.48 C322.32 464.48 323.36 484.30 325.44 494.21 C327.52 504.12 328.56 514.04 330.64 514.04 C332.72 514.04 333.76 514.04 335.84 513.23 C337.92 512.41 338.96 480.73 341.04 480.73 C343.12 480.73 344.16 488.20 346.24 488.20 C348.32 488.20 349.36 474.39 351.44 474.39 C353.52 474.39 354.56 474.39 356.64 475.04 C358.72 475.69 359.75 512.74 361.83 515.83 C363.91 518.91 364.95 518.91 367.03 518.91 C369.11 518.91 370.15 515.50 372.23 515.50 C374.31 515.50 375.35 521.84 377.43 521.84 C379.51 521.84 380.55 505.91 382.63 499.09 C384.71 492.26 385.75 489.82 387.83 487.71 C389.91 485.60 390.95 485.60 393.03 485.60 C395.11 485.60 396.15 500.39 398.23 502.66 C400.31 504.94 401.35 502.66 403.42 504.94 C405.50 507.21 406.54 515.37 408.62 521.84 C410.70 528.31 411.74 537.27 413.82 537.27 C415.90 537.27 416.94 521.84 419.02 521.84 C421.10 521.84 422.14 521.84 424.22 521.84 C426.30 521.84 427.34 521.84 429.42 524.11 C431.50 526.39 432.54 532.07 434.62 535.00 C436.70 537.92 437.74 538.74 439.82 538.74 C441.90 538.74 442.94 538.74 445.02 538.74 C447.09 538.74 448.13 533.54 450.21 533.54 C452.29 533.54 453.33 536.50 455.41 538.74 C457.49 540.98 458.53 542.35 460.61 544.75 C462.69 547.16 463.73 550.76 465.81 550.76 C467.89 550.76 468.93 544.75 471.01 544.75 C473.09 544.75 474.13 557.75 476.21 557.75 C478.29 557.75 479.33 555.48 481.41 551.90 C483.49 548.32 484.53 539.88 486.61 539.88 C488.68 539.88 489.72 567.82 491.80 577.25 C493.88 586.67 494.92 587.00 497.00 587.00 C499.08 587.00 500.12 587.00 502.20 587.00 C504.28 587.00 507.40 587.00 507.40 587.00" fill="none" stroke="#0b1c2a" stroke-opacity="0.55" stroke-width="3.6" stroke-linejoin="round" stroke-linecap="round"/>
<path d="M81.10 433.76 C81.10 433.76 84.22 463.01 86.30 465.29 C88.38 467.56 89.42 467.56 91.50 467.56 C93.58 467.56 94.62 444.81 96.70 444.81 C98.78 444.81 99.82 452.64 101.89 458.62 C103.97 464.61 105.01 469.84 107.09 474.71 C109.17 479.59 110.21 480.37 112.29 483.00 C114.37 485.63 115.41 487.88 117.49 487.88 C119.57 487.88 120.61 487.22 122.69 483.00 C124.77 478.77 125.81 474.71 127.89 466.75 C129.97 458.79 131.01 443.19 133.09 443.19 C135.17 443.19 136.21 456.02 138.29 463.82 C140.37 471.62 141.41 476.63 143.48 482.19 C145.56 487.75 146.60 488.40 148.68 491.61 C150.76 494.83 151.80 498.27 153.88 498.27 C155.96 498.27 157.00 491.94 159.08 491.94 C161.16 491.94 162.20 491.94 164.28 491.94 C166.36 491.94 167.40 475.30 169.48 467.56 C171.56 459.83 172.60 453.26 174.68 453.26 C176.76 453.26 177.80 470.39 179.88 477.96 C181.96 485.53 183.00 486.93 185.08 491.12 C187.15 495.32 188.19 497.79 190.27 498.93 C192.35 500.06 193.39 500.06 195.47 500.06 C197.55 500.06 198.59 500.06 200.67 497.79 C202.75 495.51 203.79 480.11 205.87 473.90 C207.95 467.69 208.99 466.75 211.07 466.75 C213.15 466.75 214.19 489.92 216.27 497.79 C218.35 505.65 219.39 503.51 221.47 506.07 C223.55 508.64 224.59 509.42 226.67 510.62 C228.75 511.83 229.78 512.09 231.86 512.09 C233.94 512.09 234.98 504.00 237.06 496.81 C239.14 489.63 240.18 476.18 242.26 476.18 C244.34 476.18 245.38 476.18 247.46 481.86 C249.54 487.55 250.58 505.10 252.66 505.75 C254.74 506.40 255.78 505.75 257.86 506.40 C259.94 507.05 260.98 510.17 263.06 512.58 C265.14 514.98 266.18 518.42 268.26 518.42 C270.34 518.42 271.38 502.01 273.45 502.01 C275.53 502.01 276.57 502.01 278.65 502.01 C280.73 502.01 281.77 491.61 283.85 491.61 C285.93 491.61 286.97 517.61 289.05 517.61 C291.13 517.61 292.17 511.44 294.25 511.44 C296.33 511.44 297.37 511.44 299.45 511.44 C301.53 511.44 302.57 511.44 304.65 506.89 C306.73 502.34 307.77 457.81 309.85 457.81 C311.93 457.81 312.97 469.02 315.05 469.02 C317.12 469.02 318.16 464.48 320.24 464.48 C322.32 464.48 323.36 484.30 325.44 494.21 C327.52 504.12 328.56 514.04 330.64 514.04 C332.72 514.04 333.76 514.04 335.84 513.23 C337.92 512.41 338.96 480.73 341.04 480.73 C343.12 480.73 344.16 488.20 346.24 488.20 C348.32 488.20 349.36 474.39 351.44 474.39 C353.52 474.39 354.56 474.39 356.64 475.04 C358.72 475.69 359.75 512.74 361.83 515.83 C363.91 518.91 364.95 518.91 367.03 518.91 C369.11 518.91 370.15 515.50 372.23 515.50 C374.31 515.50 375.35 521.84 377.43 521.84 C379.51 521.84 380.55 505.91 382.63 499.09 C384.71 492.26 385.75 489.82 387.83 487.71 C389.91 485.60 390.95 485.60 393.03 485.60 C395.11 485.60 396.15 500.39 398.23 502.66 C400.31 504.94 401.35 502.66 403.42 504.94 C405.50 507.21 406.54 515.37 408.62 521.84 C410.70 528.31 411.74 537.27 413.82 537.27 C415.90 537.27 416.94 521.84 419.02 521.84 C421.10 521.84 422.14 521.84 424.22 521.84 C426.30 521.84 427.34 521.84 429.42 524.11 C431.50 526.39 432.54 532.07 434.62 535.00 C436.70 537.92 437.74 538.74 439.82 538.74 C441.90 538.74 442.94 538.74 445.02 538.74 C447.09 538.74 448.13 533.54 450.21 533.54 C452.29 533.54 453.33 536.50 455.41 538.74 C457.49 540.98 458.53 542.35 460.61 544.75 C462.69 547.16 463.73 550.76 465.81 550.76 C467.89 550.76 468.93 544.75 471.01 544.75 C473.09 544.75 474.13 557.75 476.21 557.75 C478.29 557.75 479.33 555.48 481.41 551.90 C483.49 548.32 484.53 539.88 486.61 539.88 C488.68 539.88 489.72 567.82 491.80 577.25 C493.88 586.67 494.92 587.00 497.00 587.00 C499.08 587.00 500.12 587.00 502.20 587.00 C504.28 587.00 507.40 587.00 507.40 587.00" fill="none" stroke="#2481c9" stroke-width="2.2" stroke-linejoin="round" stroke-linecap="round"/>
<g fill="#fff" stroke="#3aa0ee" stroke-width="0.6"><circle cx="81.10" cy="433.76" r="1.35"/><circle cx="86.30" cy="465.29" r="1.35"/><circle cx="91.50" cy="467.56" r="1.35"/><circle cx="96.70" cy="444.81" r="1.35"/><circle cx="101.89" cy="458.62" r="1.35"/><circle cx="107.09" cy="474.71" r="1.35"/><circle cx="112.29" cy="483.00" r="1.35"/><circle cx="117.49" cy="487.88" r="1.35"/><circle cx="122.69" cy="483.00" r="1.35"/><circle cx="127.89" cy="466.75" r="1.35"/><circle cx="133.09" cy="443.19" r="1.35"/><circle cx="138.29" cy="463.82" r="1.35"/><circle cx="143.48" cy="482.19" r="1.35"/><circle cx="148.68" cy="491.61" r="1.35"/><circle cx="153.88" cy="498.27" r="1.35"/><circle cx="159.08" cy="491.94" r="1.35"/><circle cx="164.28" cy="491.94" r="1.35"/><circle cx="169.48" cy="467.56" r="1.35"/><circle cx="174.68" cy="453.26" r="1.35"/><circle cx="179.88" cy="477.96" r="1.35"/><circle cx="185.08" cy="491.12" r="1.35"/><circle cx="190.27" cy="498.93" r="1.35"/><circle cx="195.47" cy="500.06" r="1.35"/><circle cx="200.67" cy="497.79" r="1.35"/><circle cx="205.87" cy="473.90" r="1.35"/><circle cx="211.07" cy="466.75" r="1.35"/><circle cx="216.27" cy="497.79" r="1.35"/><circle cx="221.47" cy="506.07" r="1.35"/><circle cx="226.67" cy="510.62" r="1.35"/><circle cx="231.86" cy="512.09" r="1.35"/><circle cx="237.06" cy="496.81" r="1.35"/><circle cx="242.26" cy="476.18" r="1.35"/><circle cx="247.46" cy="481.86" r="1.35"/><circle cx="252.66" cy="505.75" r="1.35"/><circle cx="257.86" cy="506.40" r="1.35"/><circle cx="263.06" cy="512.58" r="1.35"/><circle cx="268.26" cy="518.42" r="1.35"/><circle cx="273.45" cy="502.01" r="1.35"/><circle cx="278.65" cy="502.01" r="1.35"/><circle cx="283.85" cy="491.61" r="1.35"/><circle cx="289.05" cy="517.61" r="1.35"/><circle cx="294.25" cy="511.44" r="1.35"/><circle cx="299.45" cy="511.44" r="1.35"/><circle cx="304.65" cy="506.89" r="1.35"/><circle cx="309.85" cy="457.81" r="1.35"/><circle cx="315.05" cy="469.02" r="1.35"/><circle cx="320.24" cy="464.48" r="1.35"/><circle cx="325.44" cy="494.21" r="1.35"/><circle cx="330.64" cy="514.04" r="1.35"/><circle cx="335.84" cy="513.23" r="1.35"/><circle cx="341.04" cy="480.73" r="1.35"/><circle cx="346.24" cy="488.20" r="1.35"/><circle cx="351.44" cy="474.39" r="1.35"/><circle cx="356.64" cy="475.04" r="1.35"/><circle cx="361.83" cy="515.83" r="1.35"/><circle cx="367.03" cy="518.91" r="1.35"/><circle cx="372.23" cy="515.50" r="1.35"/><circle cx="377.43" cy="521.84" r="1.35"/><circle cx="382.63" cy="499.09" r="1.35"/><circle cx="387.83" cy="487.71" r="1.35"/><circle cx="393.03" cy="485.60" r="1.35"/><circle cx="398.23" cy="502.66" r="1.35"/><circle cx="403.42" cy="504.94" r="1.35"/><circle cx="408.62" cy="521.84" r="1.35"/><circle cx="413.82" cy="537.27" r="1.35"/><circle cx="419.02" cy="521.84" r="1.35"/><circle cx="424.22" cy="521.84" r="1.35"/><circle cx="429.42" cy="524.11" r="1.35"/><circle cx="434.62" cy="535.00" r="1.35"/><circle cx="439.82" cy="538.74" r="1.35"/><circle cx="445.02" cy="538.74" r="1.35"/><circle cx="450.21" cy="533.54" r="1.35"/><circle cx="455.41" cy="538.74" r="1.35"/><circle cx="460.61" cy="544.75" r="1.35"/><circle cx="465.81" cy="550.76" r="1.35"/><circle cx="471.01" cy="544.75" r="1.35"/><circle cx="476.21" cy="557.75" r="1.35"/><circle cx="481.41" cy="551.90" r="1.35"/><circle cx="486.61" cy="539.88" r="1.35"/><circle cx="491.80" cy="577.25" r="1.35"/><circle cx="497.00" cy="587.00" r="1.35"/><circle cx="502.20" cy="587.00" r="1.35"/><circle cx="507.40" cy="587.00" r="1.35"/></g>
</svg>
<div class="t" style="left:69.28px;top:584px;font-size:8.10px;color:#e6e6e6;transform:scaleX(0.9600);-webkit-text-stroke:0.25px #e6e6e6;">0</div>
<div class="t" style="left:517.00px;top:584px;font-size:8.10px;color:#e6e6e6;transform:scaleX(0.9600);-webkit-text-stroke:0.25px #e6e6e6;">0</div>
<div class="t" style="left:60.63px;top:551px;font-size:8.10px;color:#e6e6e6;transform:scaleX(0.9600);-webkit-text-stroke:0.25px #e6e6e6;">200</div>
<div class="t" style="left:517.00px;top:551px;font-size:8.10px;color:#e6e6e6;transform:scaleX(0.9600);-webkit-text-stroke:0.25px #e6e6e6;">200</div>
<div class="t" style="left:60.63px;top:519px;font-size:8.10px;color:#e6e6e6;transform:scaleX(0.9600);-webkit-text-stroke:0.25px #e6e6e6;">400</div>
<div class="t" style="left:517.00px;top:519px;font-size:8.10px;color:#e6e6e6;transform:scaleX(0.9600);-webkit-text-stroke:0.25px #e6e6e6;">400</div>
<div class="t" style="left:60.63px;top:486px;font-size:8.10px;color:#e6e6e6;transform:scaleX(0.9600);-webkit-text-stroke:0.25px #e6e6e6;">600</div>
<div class="t" style="left:517.00px;top:486px;font-size:8.10px;color:#e6e6e6;transform:scaleX(0.9600);-webkit-text-stroke:0.25px #e6e6e6;">600</div>
<div class="t" style="left:60.63px;top:454px;font-size:8.10px;color:#e6e6e6;transform:scaleX(0.9600);-webkit-text-stroke:0.25px #e6e6e6;">800</div>
<div class="t" style="left:517.00px;top:454px;font-size:8.10px;color:#e6e6e6;transform:scaleX(0.9600);-webkit-text-stroke:0.25px #e6e6e6;">800</div>
<div class="t" style="left:65.39px;top:421px;font-size:8.10px;color:#e6e6e6;transform:scaleX(0.9600);-webkit-text-stroke:0.25px #e6e6e6;">1k</div>
<div class="t" style="left:517.00px;top:421px;font-size:8.10px;color:#e6e6e6;transform:scaleX(0.9600);-webkit-text-stroke:0.25px #e6e6e6;">1k</div>
<div class="t" style="left:69.83px;top:593px;font-size:7.90px;color:#e6e6e6;transform:scaleX(0.9500);-webkit-text-stroke:0.25px #e6e6e6;">Jan 01</div>
<div class="t" style="left:101.03px;top:593px;font-size:7.90px;color:#e6e6e6;transform:scaleX(0.9500);-webkit-text-stroke:0.25px #e6e6e6;">Jan 07</div>
<div class="t" style="left:132.22px;top:593px;font-size:7.90px;color:#e6e6e6;transform:scaleX(0.9500);-webkit-text-stroke:0.25px #e6e6e6;">Jan 13</div>
<div class="t" style="left:163.41px;top:593px;font-size:7.90px;color:#e6e6e6;transform:scaleX(0.9500);-webkit-text-stroke:0.25px #e6e6e6;">Jan 19</div>
<div class="t" style="left:194.60px;top:593px;font-size:7.90px;color:#e6e6e6;transform:scaleX(0.9500);-webkit-text-stroke:0.25px #e6e6e6;">Jan 25</div>
<div class="t" style="left:225.80px;top:593px;font-size:7.90px;color:#e6e6e6;transform:scaleX(0.9500);-webkit-text-stroke:0.25px #e6e6e6;">Jan 31</div>
<div class="t" style="left:256.57px;top:593px;font-size:7.90px;color:#e6e6e6;transform:scaleX(0.9500);-webkit-text-stroke:0.25px #e6e6e6;">Feb 06</div>
<div class="t" style="left:287.77px;top:593px;font-size:7.90px;color:#e6e6e6;transform:scaleX(0.9500);-webkit-text-stroke:0.25px #e6e6e6;">Feb 12</div>
<div class="t" style="left:318.96px;top:593px;font-size:7.90px;color:#e6e6e6;transform:scaleX(0.9500);-webkit-text-stroke:0.25px #e6e6e6;">Feb 18</div>
<div class="t" style="left:350.15px;top:593px;font-size:7.90px;color:#e6e6e6;transform:scaleX(0.9500);-webkit-text-stroke:0.25px #e6e6e6;">Feb 24</div>
<div class="t" style="left:381.35px;top:593px;font-size:7.90px;color:#e6e6e6;transform:scaleX(0.9500);-webkit-text-stroke:0.25px #e6e6e6;">Mar 02</div>
<div class="t" style="left:412.54px;top:593px;font-size:7.90px;color:#e6e6e6;transform:scaleX(0.9500);-webkit-text-stroke:0.25px #e6e6e6;">Mar 08</div>
<div class="t" style="left:443.73px;top:593px;font-size:7.90px;color:#e6e6e6;transform:scaleX(0.9500);-webkit-text-stroke:0.25px #e6e6e6;">Mar 14</div>
<div class="t" style="left:474.93px;top:593px;font-size:7.90px;color:#e6e6e6;transform:scaleX(0.9500);-webkit-text-stroke:0.25px #e6e6e6;">Mar 20</div>
<svg class="b" style="left:0;top:0" width="1095" height="627" viewBox="0 0 1095 627">
<circle cx="914.20" cy="471.00" r="76.65" fill="none" stroke="#fd9405" stroke-width="34.10"/>
<circle cx="914.20" cy="471.00" r="93.70" fill="none" stroke="#1f1f1f" stroke-opacity=".55" stroke-width="0.8"/>
<circle cx="914.20" cy="471.00" r="59.60" fill="none" stroke="#1f1f1f" stroke-opacity=".55" stroke-width="0.8"/>
<path d="M914.50 377.30V411.40" stroke="#8a7a55" stroke-width="0.9"/>
<path d="M913.60 564.70V574H904" stroke="#747474" stroke-width="0.8" fill="none"/>
<circle cx="806.7" cy="337.3" r="3" fill="#2a84d2"/>
<circle cx="924" cy="337.3" r="3" fill="#fd9405"/>
</svg>
<div class="t" style="left:813.60px;top:334px;font-size:7.85px;color:#e0e0e0;transform:scaleX(0.9455);-webkit-text-stroke:0.25px #e0e0e0;">Purchase Web Revenue...ALL</div>
<div class="t" style="left:931.80px;top:334px;font-size:7.85px;color:#e0e0e0;transform:scaleX(0.9453);-webkit-text-stroke:0.25px #e0e0e0;">Rental Web Revenue (...ALL</div>
<div class="t" style="left:883.40px;top:571px;font-size:7.56px;color:#e6e6e6;transform:scaleX(0.8683);-webkit-text-stroke:0.25px #e6e6e6;">100%</div>
</body></html>
